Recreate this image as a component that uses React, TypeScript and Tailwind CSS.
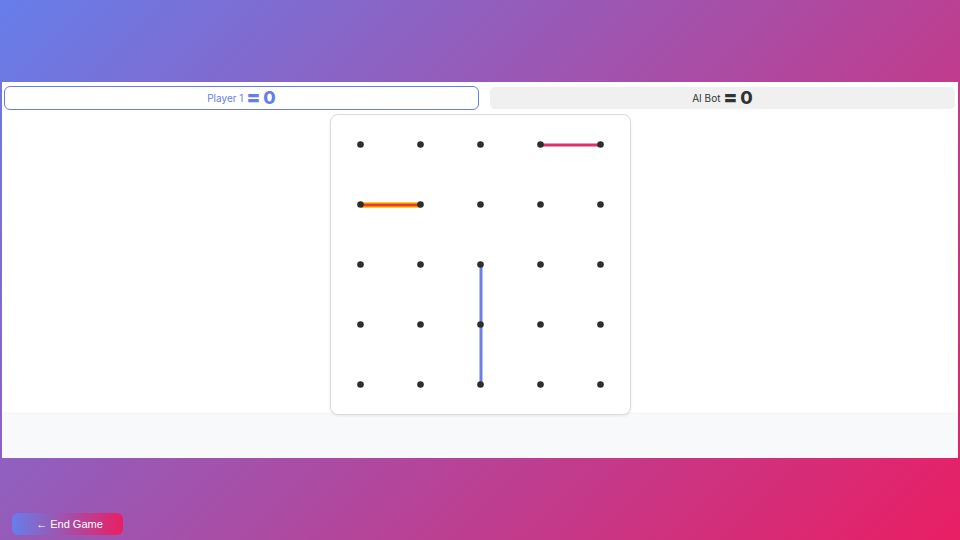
import React from "react";

const dots = [0, 1, 2, 3, 4];

export default function App() {
  const pos = (i: number) => 30 + i * 60;
  return (
    <div
      className="relative min-h-[540px] w-full flex flex-col justify-center bg-[linear-gradient(135deg,#667eea_0%,#e91e63_100%)]"
      style={{ fontFamily: "Inter, 'Noto Sans', sans-serif" }}
    >
      <div className="mx-[2px] bg-white flex flex-col pt-[4px]">
        <div className="flex items-center pl-[2px] h-[24px]">
          <div className="w-[475px] h-[24px] rounded-[6px] border-[1.5px] border-[#667eea] bg-white flex items-center justify-center gap-[3px] text-[#667eea]">
            <span className="text-[10px]">Player 1</span>
            <span className="text-[20px] font-black leading-none -mt-[2px]">=</span>
            <span className="text-[18px] font-extrabold leading-none">0</span>
          </div>
          <div className="ml-[11px] w-[465px] h-[22px] rounded-[5px] bg-[#f0f0f0] flex items-center justify-center gap-[3px] text-[#333]">
            <span className="text-[10px]">AI Bot</span>
            <span className="text-[20px] font-black leading-none -mt-[2px]">=</span>
            <span className="text-[18px] font-extrabold leading-none">0</span>
          </div>
        </div>
        <div className="flex pt-[4px] pl-[328px]">
          <div className="relative z-10 w-[301px] h-[301px] rounded-lg border border-[#dcdcdc] bg-white shadow-[0_1px_3px_rgba(0,0,0,0.08)]">
            <svg width="300" height="300" viewBox="0 0 300 300">
              <line x1={pos(3)} y1={pos(0)} x2={pos(4)} y2={pos(0)} stroke="#dc2f6b" strokeWidth="3" />
              <line x1={pos(0)} y1={pos(1)} x2={pos(1)} y2={pos(1)} stroke="#ffd700" strokeWidth="6" />
              <line x1={pos(0)} y1={pos(1)} x2={pos(1)} y2={pos(1)} stroke="#e53945" strokeWidth="3" />
              <line x1={pos(2)} y1={pos(2)} x2={pos(2)} y2={pos(4)} stroke="#6b7fe6" strokeWidth="3" />
              {dots.map((r) =>
                dots.map((c) => (
                  <circle key={`${r}-${c}`} cx={pos(c) - 0.5} cy={pos(r) - 0.5} r="3.3" fill="#2d2d2d" />
                ))
              )}
            </svg>
          </div>
        </div>
        <div className="-mt-[1px] h-[44px] bg-[#f8f9fa] shadow-[0_-1px_2px_rgba(0,0,0,0.05)]"></div>
      </div>
      <button
        className="absolute left-[12px] bottom-[5px] w-[111px] h-[22px] rounded-md bg-[linear-gradient(90deg,#667eea_0%,#e91e63_100%)] text-white text-[11px] flex items-center justify-center pl-[4px]"
        style={{ fontFamily: "'Liberation Sans', Arial, sans-serif" }}
      >
        ← End Game
      </button>
    </div>
  );
}
